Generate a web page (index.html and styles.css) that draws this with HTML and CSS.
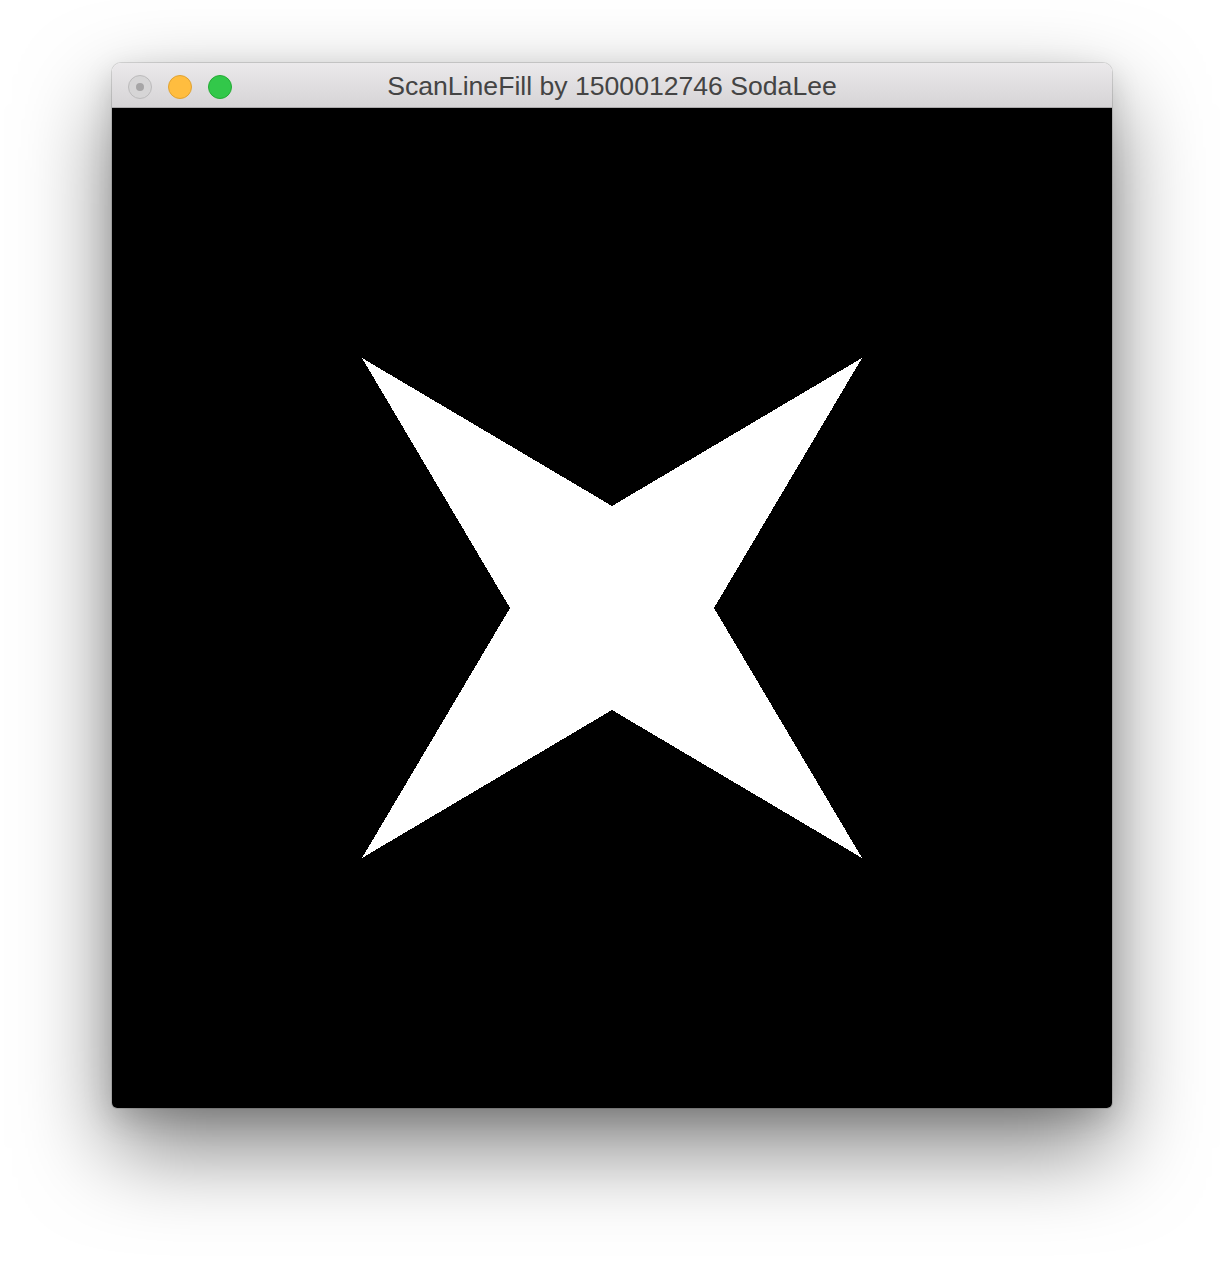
FILE: index.html
```html
<!DOCTYPE html>
<html>
<head>
<meta charset="utf-8">
<link rel="stylesheet" href="styles.css">
</head>
<body>
<div class="window">
  <div class="titlebar">
    <div class="lights">
      <span class="light close"></span>
      <span class="light min"></span>
      <span class="light max"></span>
    </div>
    <div class="title">ScanLineFill by 1500012746 SodaLee</div>
  </div>
  <div class="content">
    <svg class="canvas" width="1000" height="1000" viewBox="0 0 1000 1000">
      <polygon points="250,250 500,398 750,250 602,500 750,750 500,602 250,750 398,500" fill="#fff" shape-rendering="crispEdges"/>
    </svg>
  </div>
</div>
</body>
</html>
```
FILE: styles.css
```css
html, body {
  margin: 0;
  padding: 0;
  background: #ffffff;
}
body {
  width: 1224px;
  height: 1268px;
  overflow: hidden;
  padding-top: 63px;
  box-sizing: border-box;
}
.window {
  width: 1000px;
  margin: 0 auto;
  border-radius: 9px 9px 5px 5px;
  overflow: hidden;
  box-shadow: 0 0 0 1px rgba(0,0,0,0.12), 0 40px 90px rgba(0,0,0,0.5), 0 10px 30px rgba(0,0,0,0.15);
}
.titlebar {
  position: relative;
  height: 44px;
  background: linear-gradient(#ebe9eb, #d6d4d6);
  border-bottom: 1px solid #acaaac;
  display: flex;
  align-items: center;
}
.lights {
  display: flex;
  gap: 16px;
  padding-left: 16px;
  margin-top: 3px;
}
.light {
  width: 24px;
  height: 24px;
  border-radius: 50%;
  box-sizing: border-box;
  position: relative;
}
.close {
  background: #d6d5d6;
  border: 1px solid #bcbbbc;
}
.close::after {
  content: "";
  position: absolute;
  width: 8px;
  height: 8px;
  border-radius: 50%;
  background: #a6a5a6;
  left: 7px;
  top: 7px;
}
.min {
  background: #ffbd3f;
  border: 1px solid #e0a232;
}
.max {
  background: #32c84a;
  border: 1px solid #25ab35;
}
.title {
  position: absolute;
  left: 0;
  right: 0;
  top: 0;
  bottom: 0;
  display: flex;
  align-items: center;
  justify-content: center;
  font-family: "Liberation Sans", Arial, sans-serif;
  font-size: 26.6px;
  color: #444;
  padding-top: 3px;
}
.content {
  width: 1000px;
  height: 1000px;
  background: #000;
}
.canvas {
  display: block;
}
```
